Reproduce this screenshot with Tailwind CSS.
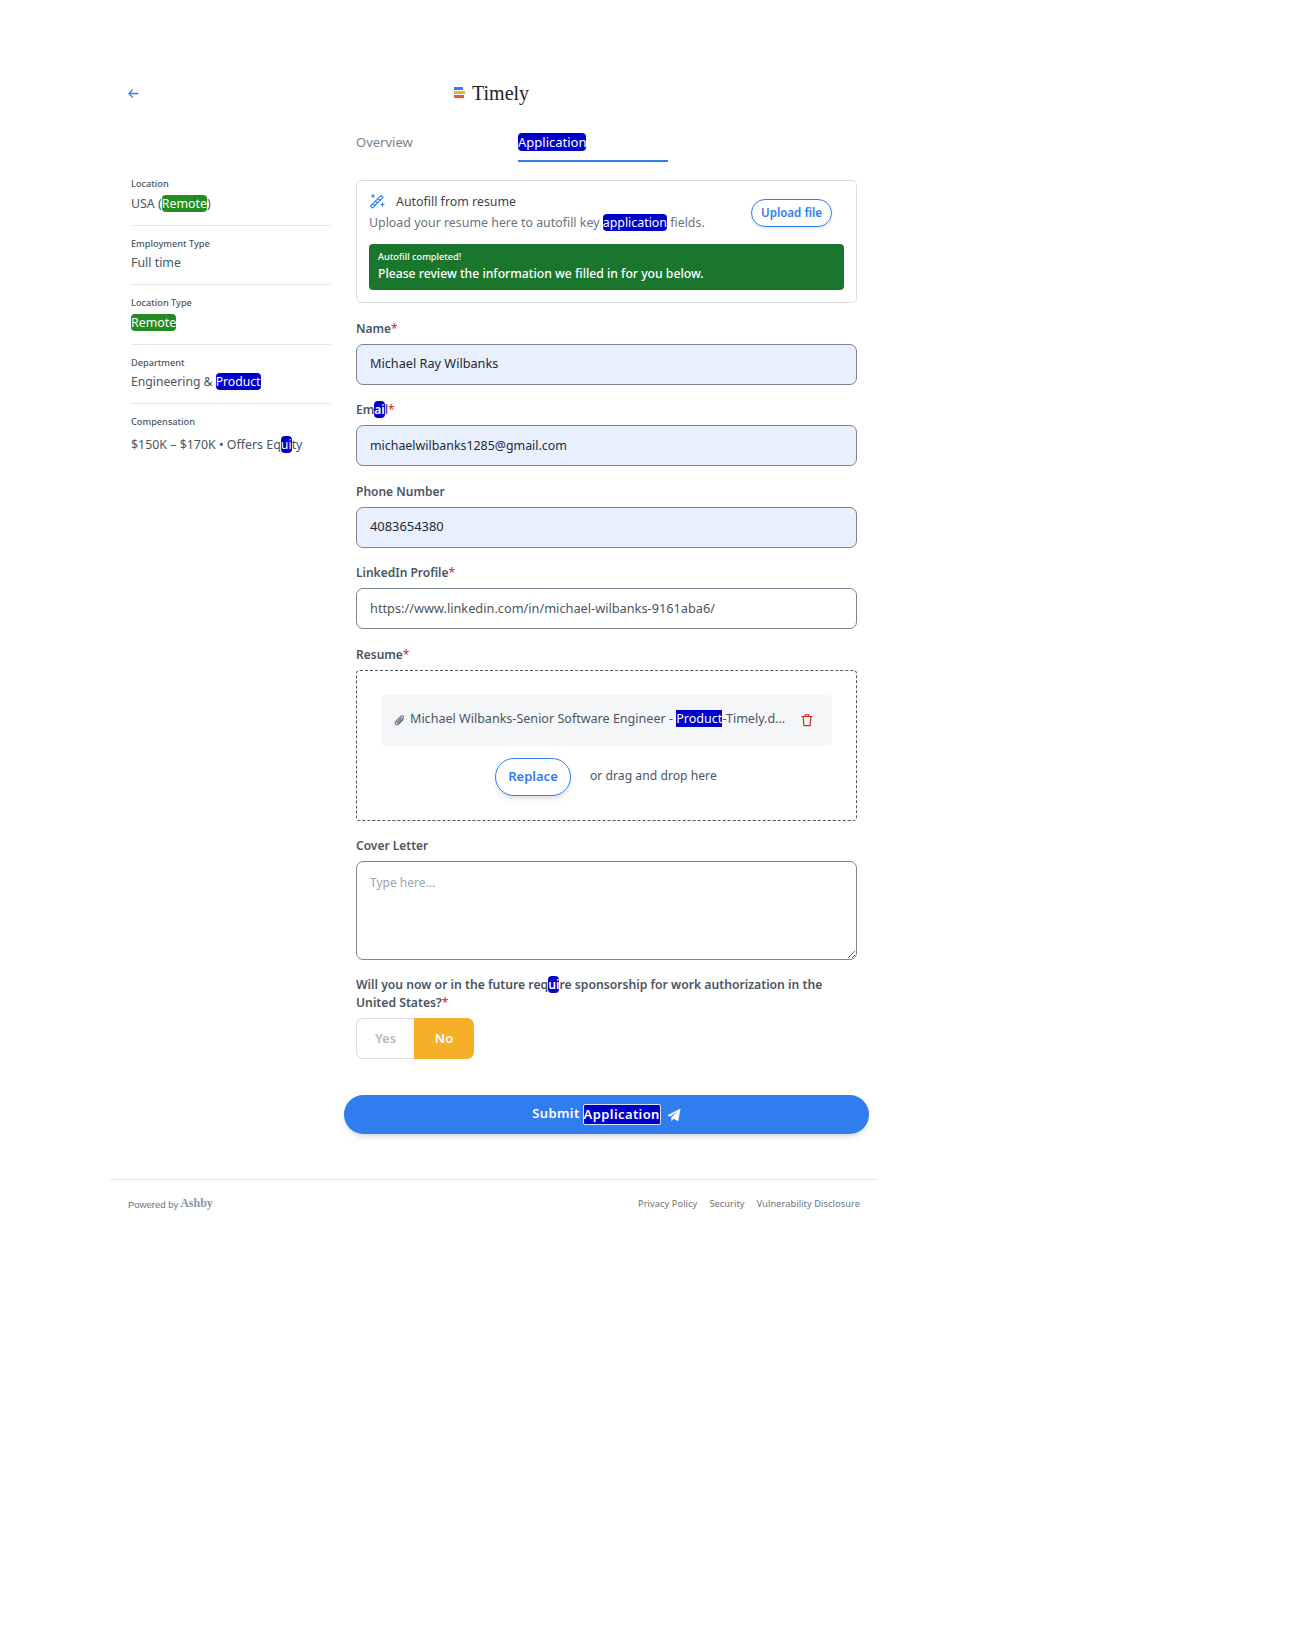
<!DOCTYPE html>
<html lang="en">
<head>
    <meta charset="UTF-8">
    <title>Timely - Application</title>
    <script src="https://cdn.jsdelivr.net/npm/@tailwindcss/browser@4"></script>
</head>
<body class="bg-white font-['Noto_Sans',sans-serif] text-[#4b5563] min-h-[1638px]">
    <div class="w-[768px] ml-[110px] pt-[80px]">
        <!-- top bar -->
        <div class="flex items-center h-[27px] relative">
            <svg class="ml-[17px] w-[13px] h-[13px] text-[#2f7dee]" viewBox="0 0 16 16" fill="none" stroke="currentColor" stroke-width="1.6"><path d="M14 8H2.500M7 3 2.500 8 7 13"/></svg>
            <div class="flex items-center ml-[314px] gap-[7px] -mt-[2px]">
                <div class="flex flex-col gap-[1px] w-[11px]">
                    <span class="h-[3px] w-[9px] bg-[#2f7dee]"></span>
                    <span class="h-[3px] w-[11px] bg-[#f5b027]"></span>
                    <span class="h-[3px] w-[10px] bg-[#f05a28]"></span>
                </div>
                <span class="font-['Liberation_Serif',serif] text-[20px] text-[#222]">Timely</span>
            </div>
        </div>

        <div class="flex pl-[21px] mt-[7px]">
            <!-- sidebar -->
            <div class="w-[200px] shrink-0 mt-[62px] text-[12.4px]">
                <div class="pb-[9.5px] border-b border-[#e6e7ec]">
                    <p class="text-[9.2px] leading-[15px] font-medium">Location</p>
                    <p class="mt-[2px] leading-[22px]">USA (<span class="bg-[#228b22] text-white rounded-sm">Remote</span>)</p>
                </div>
                <div class="pt-[10px] pb-[10.5px] border-b border-[#e6e7ec]">
                    <p class="text-[9.2px] leading-[15px] font-medium">Employment Type</p>
                    <p class="mt-[1px] leading-[22px]">Full time</p>
                </div>
                <div class="pt-[10px] pb-[9.5px] border-b border-[#e6e7ec]">
                    <p class="text-[9.2px] leading-[15px] font-medium">Location Type</p>
                    <p class="mt-[2px] leading-[22px]"><span class="bg-[#228b22] text-white rounded-sm">Remote</span></p>
                </div>
                <div class="pt-[10px] pb-[10.5px] border-b border-[#e6e7ec]">
                    <p class="text-[9.2px] leading-[15px] font-medium">Department</p>
                    <p class="mt-[1px] leading-[22px] text-[12.2px]">Engineering &amp; <span class="bg-[#0000cd] text-white rounded-sm">Product</span></p>
                </div>
                <div class="pt-[10px]">
                    <p class="text-[9.2px] leading-[15px] font-medium">Compensation</p>
                    <p class="mt-[5px] leading-[22px]">$150K – $170K • Offers Eq<span class="bg-[#0000cd] text-white rounded-sm">ui</span>ty</p>
                </div>
            </div>

            <!-- main column -->
            <div class="w-[501px] ml-[25px] text-[12.4px]">
                <div class="flex h-[48px] text-[13px]">
                    <div class="w-[162px] pt-[17px] text-[#7b7f8e] leading-[22px]">Overview</div>
                    <div class="w-[150px] pt-[17px] leading-[22px] border-b-2 border-[#2f7dee]"><span class="bg-[#0000cd] text-white rounded-sm">Application</span></div>
                </div>

                <!-- autofill card -->
                <div class="mt-[18px] h-[123px] border border-[#dcdde5] rounded-[5px] px-[12px] pt-[10px]">
                    <div class="flex justify-between h-[53px]">
                        <div>
                            <div class="flex items-center gap-[11px] h-[21px]">
                                <svg class="w-[16px] h-[16px] -mt-[2px] text-[#2f7dee]" viewBox="0 0 16 16" fill="none" stroke="currentColor" stroke-width="1.1"><path d="M1.500 13 12 2.500 14 4.500 3.500 15zM4 10.500 6 12.500M6.500 8 8.500 10M9 5.500 11 7.500"/><path d="M4 1v4M2 3h4M13.500 9.500v4M11.500 11.500h4"/></svg>
                                <span class="mt-[1px] text-[#3e4452]">Autofill from resume</span>
                            </div>
                            <p class="leading-[21px] text-[#6b7280]">Upload your resume here to autofill key <span class="bg-[#0000cd] text-white rounded-sm">application</span> fields.</p>
                        </div>
                        <button class="mr-[12px] mt-[8px] w-[81px] h-[28px] rounded-full border border-[#2f7dee] shadow-sm text-[#2f7dee] text-[11.6px] font-semibold">Upload file</button>
                    </div>
                    <div class="bg-[#1b762d] text-white rounded-[4px] h-[46px] px-[9px] pt-[7px]">
                        <p class="text-[9.2px] leading-[12px] font-medium">Autofill completed!</p>
                        <p class="text-[12.2px] leading-[20px] font-medium mt-[1px]">Please review the information we filled in for you below.</p>
                    </div>
                </div>

                <!-- fields -->
                <label class="block mt-[15px] h-[26px] text-[12px] font-semibold leading-[21px]">Name<span class="text-[#e02424] font-normal">*</span></label>
                <div class="h-[41px] bg-[#e8f0fe] border border-[#7b8494] rounded-[7px] px-[13px] pb-[2px] flex items-center text-[#1f2937] text-[12.7px]">Michael Ray Wilbanks</div>

                <label class="block mt-[14px] h-[26px] text-[12px] font-semibold leading-[22px]">Em<span class="bg-[#0000cd] text-white rounded-sm">ai</span>l<span class="text-[#e02424] font-normal">*</span></label>
                <div class="h-[41px] bg-[#e8f0fe] border border-[#7b8494] rounded-[7px] px-[13px] pt-[1px] flex items-center text-[#1f2937] text-[12.4px]">michaelwilbanks1285@gmail.com</div>

                <label class="block mt-[15px] h-[26px] text-[12px] font-semibold leading-[22px]">Phone Number</label>
                <div class="h-[41px] bg-[#e8f0fe] border border-[#7b8494] rounded-[7px] px-[13px] pb-[2px] flex items-center text-[#1f2937] text-[12.9px]">4083654380</div>

                <label class="block mt-[14px] h-[26px] text-[12px] font-semibold leading-[22px]">LinkedIn Profile<span class="text-[#e02424] font-normal">*</span></label>
                <div class="h-[41px] bg-white border border-[#7b8494] rounded-[7px] px-[13px] flex items-center text-[#4b5563] text-[12.75px]">https://www.linkedin.com/in/michael-wilbanks-9161aba6/</div>

                <label class="block mt-[15px] h-[26px] text-[12px] font-semibold leading-[22px]">Resume<span class="text-[#e02424] font-normal">*</span></label>
                <div class="h-[151px] border border-dashed border-[#4b5563] rounded-[4px] px-[24px] pt-[24px]">
                    <div class="h-[51px] bg-[#f5f6f8] rounded-[5px] flex items-center px-[13px] pb-[2px] text-[12.55px]">
                        <svg class="w-[11px] h-[11px] mt-[2px] text-[#6b7280] shrink-0" viewBox="0 0 16 16" fill="none" stroke="currentColor" stroke-width="1.600"><path d="M13.500 6.500 7 13c-1.500 1.500-3.500 1.500-4.500.5S1.500 10.500 3 9l7-7c1-1 2.500-1 3.300-.2s.8 2.200-.2 3.200L6.500 11.500c-.5.5-1.200.5-1.600.1s-.4-1.100.1-1.600L11 4"/></svg>
                        <span class="ml-[5px] w-[377px] whitespace-nowrap">Michael Wilbanks-Senior Software Engineer - <span class="bg-[#0000cd] text-white">Product</span>-Timely.d...</span>
                        <svg class="ml-[13px] w-[14px] h-[14px] text-[#e02424]" viewBox="0 0 16 16" fill="none" stroke="currentColor" stroke-width="1.400"><path d="M2 4h12M6 4V2h4v2M3.500 4l1 10.500h7l1-10.500"/></svg>
                    </div>
                    <div class="flex items-center mt-[12px] ml-[114px]">
                        <button class="w-[76px] h-[38px] rounded-full border border-[#2f7dee] shadow-md text-[#2f7dee] text-[13px] font-semibold">Replace</button>
                        <span class="ml-[19px] -mt-[2px] text-[12.2px]">or drag and drop here</span>
                    </div>
                </div>

                <label class="block mt-[14px] h-[26px] text-[12px] font-semibold leading-[22px]">Cover Letter</label>
                <textarea class="block w-full h-[99px] border border-[#7b8494] rounded-[7px] px-[13px] py-[12px] text-[12px] placeholder:text-[#9ca3af]" placeholder="Type here..."></textarea>

                <p class="mt-[16px] pr-[30px] text-[12.2px] font-semibold leading-[18px]">Will you now or in the future req<span class="bg-[#0000cd] text-white rounded-sm">ui</span>re sponsorship for work authorization in the United States?<span class="text-[#e02424] font-normal">*</span></p>
                <div class="flex mt-[6px] h-[41px] w-[118px] text-[13px] font-semibold">
                    <div class="w-[58px] border border-r-0 border-[#dcdde5] rounded-l-[7px] flex items-center justify-center text-[#b5b8c6]">Yes</div>
                    <div class="w-[60px] bg-[#f5b027] text-white rounded-r-[7px] flex items-center justify-center">No</div>
                </div>

                <button class="flex items-center justify-center w-[525px] -ml-[12px] mt-[36px] h-[39px] rounded-full bg-[#2f7dee] text-white text-[13px] font-semibold tracking-[0.4px] shadow-md">
                    <span class="-mt-[2px]">Submit</span>
                    <span class="ml-[4px] bg-[#0000cd] rounded-[1px] outline outline-1 outline-white/80">Application</span>
                    <svg class="ml-[7px] w-[14px] h-[14px]" viewBox="0 0 16 16" fill="currentColor"><path d="M15.500.5 12.800 15 7.500 12.300 5 15.500 4.800 11 12 3.500 3.500 10 .5 8.300z"/></svg>
                </button>
            </div>
        </div>

        <!-- footer -->
        <div class="mt-[45px] border-t border-[#e5e7eb] h-[48px] flex items-center justify-between px-[18px]">
            <div class="flex items-baseline gap-[2px] text-[9.5px] text-[#6b7280] font-['Liberation_Sans',sans-serif]">
                Powered by <span class="font-['Liberation_Serif',serif] font-bold text-[12px] text-[#8b93a5] -translate-y-[1px]">Ashby</span>
            </div>
            <div class="flex gap-[12px] text-[9.2px] tracking-[0.1px] text-[#6b7280]">
                <a>Privacy Policy</a>
                <a>Security</a>
                <a>Vulnerability Disclosure</a>
            </div>
        </div>
    </div>
</body>
</html>
